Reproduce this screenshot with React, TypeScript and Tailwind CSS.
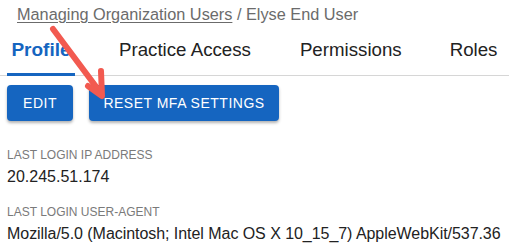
import React from "react";

const font = { fontFamily: '"Liberation Sans", Arial, sans-serif' };

export default function App() {
  return (
    <div className="relative w-[509px] h-[252px] bg-white overflow-hidden" style={font}>
      <div className="pl-[17px] pt-[4px] text-[16.3px] leading-[20px] text-[#6b6b6b]">
        <span className="underline underline-offset-2">Managing Organization Users</span>
        <span> / Elyse End User</span>
      </div>

      <div className="mt-[2px] flex items-end border-b border-[#d6d6d6] pl-[7px] h-[50px]">
        <div className="w-[68px] h-full flex items-center justify-center border-b-[3px] border-[#1565c0] -mb-px text-[19px] font-bold text-[#1565c0]">
          Profile
        </div>
        <div className="ml-[44px] h-full flex items-center text-[18.7px] text-[#222]">Practice Access</div>
        <div className="ml-[49px] h-full flex items-center text-[18.7px] text-[#222]">Permissions</div>
        <div className="ml-[48px] h-full flex items-center text-[18.7px] text-[#222]">Roles</div>
      </div>

      <div className="mt-[9px] pl-[7px] flex gap-[16px]">
        <button className="w-[66px] h-[36px] rounded-[4px] bg-[#1565c0] text-white text-[14px] tracking-[0.5px] shadow-[0_2px_3px_rgba(0,0,0,0.3)]">
          EDIT
        </button>
        <button className="w-[190px] h-[36px] rounded-[4px] bg-[#1565c0] text-white text-[14px] tracking-[0.5px] shadow-[0_2px_3px_rgba(0,0,0,0.3)]">
          RESET MFA SETTINGS
        </button>
      </div>

      <div className="pl-[7px] mt-[27px] text-[12px] leading-[14px] text-[#7a7a7a]">LAST LOGIN IP ADDRESS</div>
      <div className="pl-[7px] mt-[5px] text-[16px] leading-[20px] text-[#222]">20.245.51.174</div>
      <div className="pl-[7px] mt-[18px] text-[12px] leading-[14px] text-[#7a7a7a]">LAST LOGIN USER-AGENT</div>
      <div className="pl-[7px] mt-[5px] text-[16px] leading-[20px] text-[#222] whitespace-nowrap tracking-[-0.05px]">
        Mozilla/5.0 (Macintosh; Intel Mac OS X 10_15_7) AppleWebKit/537.36
      </div>

      <svg className="absolute left-0 top-0 pointer-events-none" width="509" height="252">
        <g stroke="#f25a50" strokeWidth="6" strokeLinecap="round" strokeLinejoin="round" fill="none">
          <line x1="53" y1="29" x2="100" y2="92" />
          <polyline points="88,86 102,96 101,71" />
        </g>
      </svg>
    </div>
  );
}
